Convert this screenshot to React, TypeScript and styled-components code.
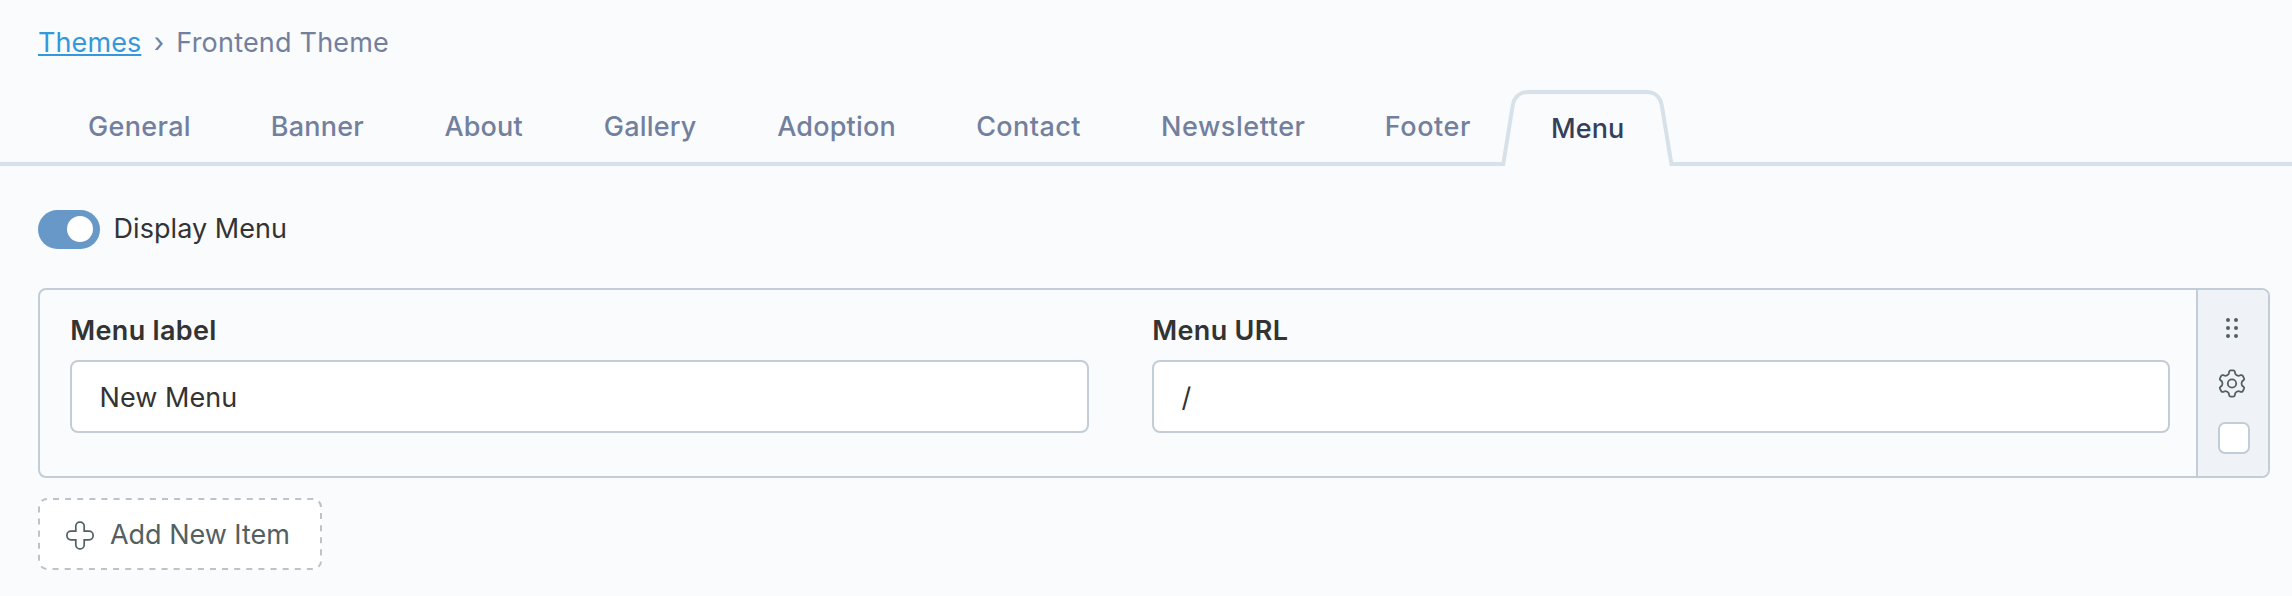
import React from "react";
import styled, { createGlobalStyle } from "styled-components";

const color = {
  page: "#fafbfd",
  line: "#d7e1ea",
  border: "#c2cdd8",
  muted: "#72809d",
  ink: "#333333",
  icon: "#536061",
  link: "#3498db",
};

const GlobalStyle = createGlobalStyle`
  *, *::before, *::after { box-sizing: border-box; }
  body {
    margin: 0;
    background: ${color.page};
    color: ${color.ink};
    font: 400 27px/32px Inter, "Liberation Sans", sans-serif;
  }
`;

const Page = styled.main`
  display: flex;
  flex-direction: column;
  height: 596px;
  overflow: hidden;
`;

const Breadcrumb = styled.nav`
  display: flex;
  height: 90px;
  padding: 27px 38px 0;
  color: ${color.muted};
`;

const Crumb = styled.span`
  letter-spacing: 0.2px;
`;

const CrumbLink = styled.a`
  color: ${color.link};
  letter-spacing: 0.09px;
  text-decoration: underline;
  text-decoration-thickness: 2px;
  text-underline-offset: 2px;
`;

const CrumbSeparator = styled.span`
  width: 35px;
  padding-left: 12.5px;
`;

const TabBar = styled.div`
  display: flex;
  height: 76px;
  padding-left: 48px;
  border-bottom: 4px solid ${color.line};
`;

const Tab = styled.button<{ $width: number; $tracking: number }>`
  flex: none;
  width: ${(p) => p.$width}px;
  height: 72px;
  padding: 21px 0 19px 40px;
  border: 0;
  background: none;
  color: ${color.muted};
  font: inherit;
  font-weight: 500;
  letter-spacing: ${(p) => p.$tracking}px;
  text-align: left;
  white-space: nowrap;
`;

const ActiveTab = styled(Tab)`
  position: relative;
  height: 76px;
  padding: 23px 0 21px 50px;
  color: #34405a;
`;

const TabShape = styled.svg`
  position: absolute;
  inset: 0;
`;

const TabText = styled.span`
  position: relative;
`;

const Form = styled.section`
  display: flex;
  flex-direction: column;
  align-items: flex-start;
  padding: 44px 22px 0 38px;
`;

const SwitchRow = styled.label`
  display: flex;
  align-items: center;
  gap: 13.5px;
  height: 39px;
  margin-bottom: 39px;
  letter-spacing: 0.06px;
`;

const SwitchText = styled.span`
  margin-top: -1px;
`;

const Track = styled.span`
  display: flex;
  justify-content: flex-end;
  width: 62px;
  height: 39px;
  padding: 6px 7px;
  border-radius: 20px;
  background: #6798c8;
`;

const Knob = styled.span`
  width: 26px;
  height: 26px;
  border-radius: 50%;
  background: #fff;
`;

const Card = styled.div`
  display: flex;
  align-self: stretch;
  height: 190px;
  border: 2px solid ${color.border};
  border-radius: 8px;
  overflow: hidden;
`;

const Fields = styled.div`
  flex: 1;
  display: grid;
  grid-template-columns: 1019px 1018px;
  column-gap: 63px;
  align-content: start;
  padding: 25px 0 0 30px;
`;

const Field = styled.label`
  display: flex;
  flex-direction: column;
  gap: 13px;
`;

const FieldLabel = styled.span`
  padding-left: 0.3px;
  font-weight: 600;
  letter-spacing: 0.32px;
`;

const Input = styled.input`
  width: 100%;
  height: 73px;
  padding: 2px 27.6px 0;
  border: 2px solid ${color.border};
  border-radius: 8px;
  outline: 0;
  background: #fff;
  color: ${color.ink};
  font: inherit;
  letter-spacing: 0.03px;
`;

const Actions = styled.aside`
  display: flex;
  flex-direction: column;
  width: 72px;
  padding: 28px 0 0 20px;
  border-left: 2px solid ${color.border};
  background: #eff3f8;
  color: ${color.icon};
`;

const GripIcon = styled.svg`
  margin-bottom: 31px;
`;

const GearIcon = styled.svg`
  margin-bottom: 24px;
`;

const Checkbox = styled.span`
  width: 32px;
  height: 32px;
  border: 2px solid ${color.border};
  border-radius: 7px;
  background: #fff;
`;

const AddButton = styled.button`
  position: relative;
  display: flex;
  align-items: center;
  width: 284px;
  height: 72px;
  margin-top: 20px;
  padding: 0 0 0 28px;
  gap: 16px;
  border: 0;
  border-radius: 9px;
  background: #fff;
  color: ${color.icon};
  font: inherit;
  letter-spacing: -0.03px;
  white-space: nowrap;
`;

const DashedOutline = styled.svg`
  position: absolute;
  inset: 0;
`;

const PlusIcon = styled.svg`
  margin-top: 2px;
`;

const AddText = styled.span`
  padding-top: 2px;
`;

const tabs = [
  { label: "General", width: 182.7, tracking: 0.34 },
  { label: "Banner", width: 173.8, tracking: 0.24 },
  { label: "About", width: 159.3, tracking: 0.15 },
  { label: "Gallery", width: 173.4, tracking: 0.19 },
  { label: "Adoption", width: 199, tracking: 0.2 },
  { label: "Contact", width: 184.8, tracking: 0.4 },
  { label: "Newsletter", width: 223.7, tracking: 0.55 },
  { label: "Footer", width: 156.3, tracking: 0.62 },
];

// The gear outline: one tooth and the valley after it, turned six times.
const gearPath = (() => {
  const parts: string[] = [];
  for (let i = 0; i < 6; i++) {
    const a = (i * Math.PI) / 3;
    const pt = (x: number, y: number) =>
      `${(x * Math.cos(a) - y * Math.sin(a)).toFixed(2)} ${(x * Math.sin(a) + y * Math.cos(a)).toFixed(2)}`;
    parts.push(
      `${i ? "L" : "M"}${pt(-3.2, -10)}`,
      `L${pt(-2.9, -11.6)}Q${pt(-2.6, -13.1)} ${pt(-1.3, -13.1)}`,
      `L${pt(1.3, -13.1)}Q${pt(2.6, -13.1)} ${pt(2.9, -11.6)}`,
      `L${pt(3.2, -10)}C${pt(3.5, -8.8)} ${pt(5.87, -7.43)} ${pt(7.06, -7.77)}`
    );
  }
  return parts.join("") + "Z";
})();

export default function App() {
  return (
    <Page>
      <GlobalStyle />
      <Breadcrumb>
        <CrumbLink>Themes</CrumbLink>
        <CrumbSeparator>›</CrumbSeparator>
        <Crumb>Frontend Theme</Crumb>
      </Breadcrumb>
      <TabBar>
        {tabs.map((t) => (
          <Tab key={t.label} $width={t.width} $tracking={t.tracking}>
            {t.label}
          </Tab>
        ))}
        <ActiveTab $width={173} $tracking={0.1}>
          <TabShape width="173" height="76" viewBox="0 0 173 76">
            <path
              d="M1.3 80L11.8 15C13.3 7 19 2 27 2H145.5C153.5 2 159.2 7 160.7 15L171.4 80"
              fill={color.page}
              stroke={color.line}
              strokeWidth="4"
            />
          </TabShape>
          <TabText>Menu</TabText>
        </ActiveTab>
      </TabBar>
      <Form>
        <SwitchRow>
          <Track>
            <Knob />
          </Track>
          <SwitchText>Display Menu</SwitchText>
        </SwitchRow>
        <Card>
          <Fields>
            <Field>
              <FieldLabel>Menu label</FieldLabel>
              <Input defaultValue="New Menu" />
            </Field>
            <Field>
              <FieldLabel>Menu URL</FieldLabel>
              <Input defaultValue="/" />
            </Field>
          </Fields>
          <Actions>
            <GripIcon width="28" height="20" viewBox="0 0 28 20" fill="currentColor">
              {[2, 10, 18].map((y) => (
                <React.Fragment key={y}>
                  <circle cx="10" cy={y} r="2" />
                  <circle cx="18" cy={y} r="2" />
                </React.Fragment>
              ))}
            </GripIcon>
            <GearIcon
              width="28"
              height="29"
              viewBox="-14 -14.5 28 29"
              fill="none"
              stroke="currentColor"
              strokeWidth="1.8"
              strokeLinejoin="round"
            >
              <path d={gearPath} />
              <circle r="4.2" />
            </GearIcon>
            <Checkbox role="checkbox" aria-checked={false} />
          </Actions>
        </Card>
        <AddButton>
          <DashedOutline width="284" height="72" viewBox="0 0 284 72" fill="none">
            <rect
              x="1"
              y="1"
              width="282"
              height="70"
              rx="8"
              stroke="#bdc3c7"
              strokeWidth="2"
              strokeDasharray="6.05 6.06"
              strokeDashoffset="-6"
            />
          </DashedOutline>
          <PlusIcon
            width="28"
            height="29"
            viewBox="-14 -14.5 28 29"
            fill="none"
            stroke="currentColor"
            strokeWidth="1.7"
          >
            <path d="M-4.2-4.3V-9.4A4 4 0 0 1-.2-13.4H.2A4 4 0 0 1 4.2-9.4V-4.3H9.1A4 4 0 0 1 13.1-.3V.3A4 4 0 0 1 9.1 4.3H4.2V9.4A4 4 0 0 1 .2 13.4H-.2A4 4 0 0 1-4.2 9.4V4.3H-9.1A4 4 0 0 1-13.1.3V-.3A4 4 0 0 1-9.1-4.3Z" />
          </PlusIcon>
          <AddText>Add New Item</AddText>
        </AddButton>
      </Form>
    </Page>
  );
}
